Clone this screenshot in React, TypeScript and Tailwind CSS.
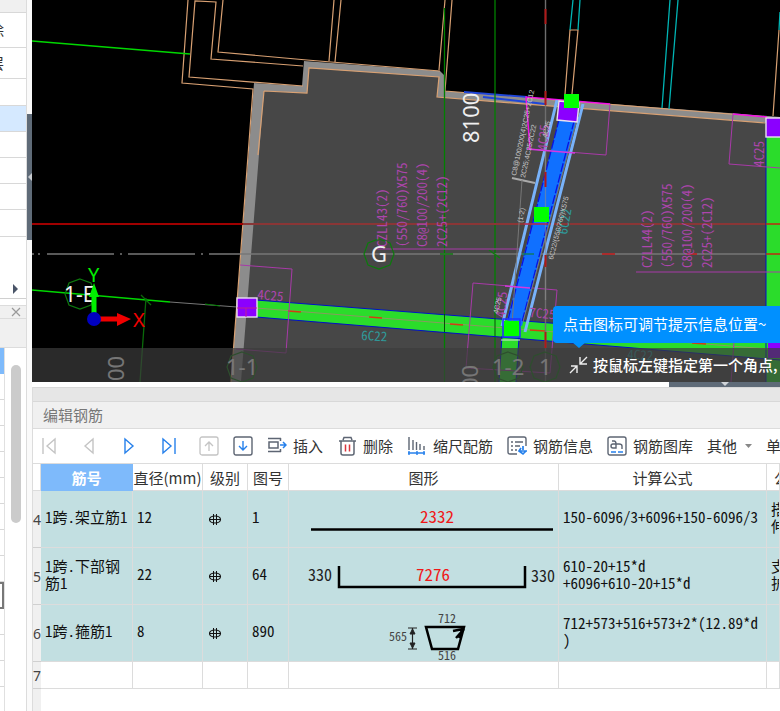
import React from "react";

const ui = "font-['Noto_Sans_CJK_SC',sans-serif]";
const mono = "font-['Noto_Sans_Mono_CJK_SC','Liberation_Mono','Noto_Sans_CJK_SC',monospace]";
const cad = "font-['Noto_Sans_Mono_CJK_SC','Noto_Sans_CJK_SC',sans-serif] text-[13px] font-light";
const axis = "font-['Noto_Sans',sans-serif] text-[22px]";

type Label = { x: number; y: number; r: number; t: string };

const beamLabels: Label[] = [
  { x: 387, y: 247, r: -90, t: "CZLL43(2)" },
  { x: 407, y: 247, r: -90, t: "(550/760)X575" },
  { x: 427, y: 247, r: -90, t: "C8@100/200(4)" },
  { x: 447, y: 247, r: -90, t: "2C25+(2C12)" },
  { x: 652, y: 268, r: -90, t: "CZLL44(2)" },
  { x: 672, y: 268, r: -90, t: "(550/760)X575" },
  { x: 692, y: 268, r: -90, t: "C8@100/200(4)" },
  { x: 712, y: 268, r: -90, t: "2C25+(2C12)" },
  { x: 257, y: 299, r: 5, t: "4C25" },
  { x: 547, y: 151, r: -85, t: "4C25" },
  { x: 764, y: 167, r: -90, t: "4C25" },
  { x: 505, y: 318, r: -85, t: "4C25" },
  { x: 529, y: 317, r: 5, t: "7C25" },
];

const tealLabels: Label[] = [
  { x: 361, y: 340, r: 3, t: "6C22" },
  { x: 627, y: 359, r: 3, t: "4C22" },
  { x: 567, y: 235, r: -80, t: "6C22" },
];

const tinyLabels: Label[] = [
  { x: 516, y: 176, r: -78, t: "C8@100/200(4)2C25+2C12" },
  { x: 525, y: 178, r: -78, t: "2C25;4C25/2C22" },
  { x: 547, y: 138, r: -78, t: "4C25" },
  { x: 553, y: 260, r: -76, t: "6C22/(550/760)X575" },
  { x: 522, y: 223, r: -78, t: "(1-2)" },
  { x: 498, y: 314, r: -78, t: "4C25" },
];

const octagons = [
  [80, 294],
  [379, 254],
  [242, 367],
  [508, 367],
  [545, 367],
];

function Labels({ items, className }: { items: Label[]; className: string }) {
  return (
    <g className={className}>
      {items.map((l, i) => (
        <text key={i} transform={`translate(${l.x} ${l.y}) rotate(${l.r})`}>
          {l.t}
        </text>
      ))}
    </g>
  );
}

function Drawing() {
  return (
    <svg
      viewBox="32 0 748 382"
      preserveAspectRatio="xMinYMin slice"
      className="block h-full w-full"
      fill="none"
      role="img"
      aria-label="CAD"
    >
      <rect x="32" y="0" width="748" height="382" fill="#000" />
      <path d="M258 86 L305 89 L307 64 L441 74 L441 94 L780 120 V382 H236 Z" fill="#474747" />
      <path
        d="M254 83 L302 86 L304 61 L440 71 L444 75 V91 L780 117 V124 L437 97 L439 77 L309 68 L307 93 L264 91 L241 382 H231 Z"
        fill="#8c8c8c"
      />
      <g stroke="#d9a173" strokeWidth="1.2">
        <path d="M188 0 L182 83 L253 89 L231 382" />
        <path d="M303 86 L189 77 L195 1 L216 2 L211 59 L303 66" />
        <path d="M223 0 L218 52 L307 60 L440 71" />
        <path d="M264 91 L258 155 M264 91 L307 93 L309 68 L439 77 L437 97 L765 123" />
        <path d="M334 0 L329 61 M341 0 L335 62 M445 0 L439 70 M452 0 L445 91 L767 117" />
        <path d="M565 94 L570 30 H578 L572 94 M779 30 L773 116" />
      </g>
      <path d="M573 0 L570 30 M580 0 L578 30 M670 0 L662 108 M678 0 L669 109 M780 12 L779 30" stroke="#00b4b4" strokeWidth="1.3" />
      <path d="M464 92 L527 97 M483 97 L545 104" stroke="#1f46d8" strokeWidth="2" />

      <path d="M32 41 L190 54 M32 290 L170 302" stroke="#00d800" strokeWidth="1.4" />
      <path d="M170 302 L237 307" stroke="#777" />
      <path d="M205 304 L220 306" stroke="#008000" />
      <path d="M146 298 L140 382 M141 295 L151 305" stroke="#0a6a0a" strokeWidth="1.3" />
      <path d="M444.5 8 V382 M495 0 V382" stroke="#008000" strokeWidth="1.3" />

      <path d="M32 224 H243" stroke="#a00000" strokeWidth="2" />
      <path d="M243 224 H780" stroke="#8a3636" strokeWidth="2" />
      <path d="M32 254 H34 M38 254 H40 M47 254 H114 M120 254 H122 M128 254 H195 M201 254 H203 M209 254 H780" stroke="#777" strokeWidth="1.4" />
      <path d="M440 254 H453 M489 250 L500 258" stroke="#107a10" strokeWidth="1.4" />
      <path d="M602 254 H615 M687 254 H697" stroke="#c01818" strokeWidth="1.6" />

      <g fill="#2bdc2b">
        <path d="M256 300 L780 341 V360 L256 317 Z" />
        <path d="M502 336 L519 337 L516 382 H499 Z" />
        <rect x="766" y="137" width="14" height="245" />
      </g>
      <path d="M256 300 L780 341 M256 317 L780 360 M502 336 L499 382 M519 337 L516 382 M766 137 V382" stroke="#0010c8" strokeWidth="1" />
      <path d="M256 308 L780 350" stroke="#8a9a60" />
      <path d="M288 311 L301 312 M369 317 L382 318 M450 324 L463 325 M530 330 L545 331 M692 343 L706 344" stroke="#d04010" strokeWidth="1.6" />
      <path d="M444.5 314 V332 M495 318 V336" stroke="#0a4a0a" />
      <path d="M766 224 H780 M766 254 H780" stroke="#c02a10" strokeWidth="1.6" />

      <g stroke="#a83aa8">
        <path d="M606 155 L530 149 M610 104 L606 155" />
        <path d="M733 114 L729 164 L780 168" />
        <path d="M473 283 L557 290 L550 373 L466 368 Z" />
        <path d="M240 265 L292 269 L286 353 L236 349" />
        <path d="M376 249 H522 M636 272 H780 M734 342 L731 382" />
      </g>
      <path d="M530 149 L526 97 L610 104 M733 114 L767 117" stroke="#f010e8" strokeWidth="1.5" />

      <path d="M545.5 0 V382" stroke="#6e6e6e" strokeWidth="1.4" />
      <path d="M562 108 L580 108 L522 326 L507 320 Z" fill="#1070ff" />
      <path d="M557 100 L502 326 M583 104 L525 332" stroke="#78b2fa" strokeWidth="3" />
      <path d="M562 108 L508 320 M577 110 L522 322" stroke="#0a12e0" strokeWidth="1.3" strokeDasharray="9 2" />
      <path d="M580 108 L523 322" stroke="#777" strokeWidth="1" />
      <path d="M545.5 120 V300" stroke="#8a8a8a" strokeOpacity=".6" strokeWidth="1.3" />
      <path d="M512 178 L535 183" stroke="#aaa" strokeWidth="2" />
      <path d="M522 180 L512 325" stroke="#777" />
      <path d="M545.5 9 V24 M545.5 91 V105 M545.5 172 V187 M545.5 255 V267 M545.5 332 V348" stroke="#b01818" strokeWidth="2" />
      <path d="M527 149 L575 153 M505 286 L530 288" stroke="#d838e0" strokeWidth="1.3" />
      <path d="M524 224 H548" stroke="#b02a50" strokeWidth="1.6" />
      <path d="M522 254 H534" stroke="#107a70" strokeWidth="1.6" />

      <g fill="#8b00ff" stroke="#e8e0f0" strokeWidth="1.4">
        <rect x="237" y="298" width="20" height="19" />
        <path d="M559 101 L579 103 L577 122 L557 120 Z" />
        <rect x="766" y="118" width="20" height="19" />
      </g>
      <rect x="768" y="342" width="12" height="16" fill="#8b00ff" />
      <path d="M237 308 H257 M246 308 V317" stroke="#c02090" />
      <rect x="503" y="319" width="17" height="18" stroke="#2030ff" strokeWidth="1.5" />
      <path d="M501 340 H520" stroke="#ddd" />

      <g stroke="#0d7a0d" strokeWidth="1.2">
        {octagons.map(([cx, cy]) => (
          <path key={cx} d={`M${cx} ${cy - 15} l11 4 l4 11 l-4 11 l-11 4 l-11 -4 l-4 -11 l4 -11 z`} />
        ))}
      </g>

      <Labels items={beamLabels} className={`${cad} fill-[#ad45ad]`} />
      <Labels items={tealLabels} className={`${cad} fill-[#2f9a9a]`} />
      <Labels items={tinyLabels} className="fill-[#c8c8c8] font-['Liberation_Sans',sans-serif] text-[7px]" />

      <g className={`${axis} fill-[#f0f0f0]`}>
        <text transform="translate(479 143) rotate(-90)">8100</text>
        <text x="371" y="262">G</text>
        <text x="64" y="302" className="text-[21px]">1-E</text>
      </g>
      <g className={`${axis} fill-[#fff]`}>
        <text transform="translate(124 381) rotate(-90)">00</text>
        <text transform="translate(478 390) rotate(-90)">00</text>
        <text x="226" y="375">1-1</text>
        <text x="492" y="375">1-2</text>
        <text x="539" y="375">1</text>
      </g>

      <g fill="#00ff00">
        <rect x="564" y="94" width="15" height="14" />
        <rect x="534" y="207" width="15" height="15" />
        <rect x="504" y="321" width="15" height="15" />
      </g>

      <path d="M94 319 V292" stroke="#00f000" strokeWidth="5" />
      <path d="M89 297 L94 283 L99 297 Z" fill="#00f000" />
      <path d="M94 319 H118" stroke="#f00000" strokeWidth="5" />
      <path d="M117 313 L131 319 L117 326 Z" fill="#f00000" />
      <circle cx="94" cy="319" r="7" fill="#0000c0" />
      <text x="88" y="282" className="fill-[#00f000] font-['Noto_Sans',sans-serif] text-[20px]">Y</text>
      <text x="133" y="327" className="fill-[#f00000] font-['Noto_Sans',sans-serif] text-[20px]">X</text>
    </svg>
  );
}

function Viewport() {
  return (
    <section className="relative h-[382px] overflow-hidden bg-black">
      <Drawing />
      <div className="absolute inset-x-0 bottom-0 flex h-[34px] items-center overflow-hidden bg-[#3c3c3c]/70">
        <svg className="ml-[536px] shrink-0" width="20" height="20" viewBox="0 0 20 20" fill="none" stroke="#eee" strokeWidth="1.4">
          <path d="M2 18 L9 11 M3 11 H9 V18 M19 2 L12 9 M12 2 V9 H19" />
        </svg>
        <span className="ml-[5px] text-[15px] font-medium whitespace-nowrap text-white">按鼠标左键指定第一个角点,</span>
      </div>
      <div className="absolute top-[306px] right-0 left-[521px] flex h-[37px] items-center rounded-l bg-[#0090ff] pl-[10px] text-[15px] whitespace-nowrap text-white">
        点击图标可调节提示信息位置~
        <svg className="absolute top-[36px] left-[19px]" width="14" height="7" viewBox="0 0 14 7">
          <path d="M0 0 H14 L7 6 Z" fill="#0090ff" />
        </svg>
      </div>
    </section>
  );
}

const listRows = [
  { h: "h-[35px]", t: "除", on: false },
  { h: "h-[31px]", t: "层", on: false },
  { h: "h-[27px]", t: "", on: false },
  { h: "h-[26px]", t: "", on: true },
  { h: "h-[26px]", t: "", on: false },
  { h: "h-[26px]", t: "", on: false },
  { h: "h-[26px]", t: "", on: false },
  { h: "h-[27px]", t: "", on: false },
];

function Sidebar() {
  return (
    <aside className="flex w-[27px] shrink-0 flex-col border-r border-[#dcdcdc] bg-white">
      <div className="flex h-[299px] flex-col border-b border-[#d0d0d0]">
        <div className="h-[13px] border-b border-[#d8d8d8] bg-[#f0f0f0]" />
        {listRows.map((r, i) => (
          <div key={i} className={`${r.h} flex shrink-0 items-center border-b border-[#d8d8d8] ${r.on ? "bg-[#d5e9ff]" : ""}`}>
            <span className="flex w-[4px] justify-end overflow-hidden text-[15px] text-[#333]">{r.t}</span>
          </div>
        ))}
        <button type="button" aria-label="展开" className="mt-auto mb-[4px] ml-[13px] w-[8px]">
          <svg width="6" height="10" viewBox="0 0 6 10"><path d="M0 0 L5 5 L0 10 Z" fill="#4a5568" /></svg>
        </button>
      </div>
      <div className="mt-[6px] flex h-[14px] items-center justify-end border-y border-[#dcdcdc] bg-[#f0f0f0] pr-[4px]">
        <button type="button" aria-label="关闭">
          <svg width="11" height="10" viewBox="0 0 11 10" stroke="#999" strokeWidth="1.2"><path d="M1 1 L9 9 M9 1 L1 9" /></svg>
        </button>
      </div>
      <div className="h-[29px] border-b border-[#dcdcdc] bg-[#f0f0f0]" />
      <div className="flex flex-1">
        <div className="flex w-[5px] flex-col border-r border-[#e0e0e0]">
          <div className="h-[26px] shrink-0 bg-[#7ebafb]" />
          {[0, 1, 2, 3, 4, 5, 6, 7].map((n) => (
            <div key={n} className="h-[26px] shrink-0 border-b border-[#d8d8d8]" />
          ))}
          <div className="h-[27px] shrink-0 border-y-2 border-r-2 border-[#777]" />
          {[0, 1, 2].map((n) => (
            <div key={n} className="h-[26px] shrink-0 border-b border-[#d8d8d8]" />
          ))}
        </div>
        <div className="mt-[17px] ml-[6px] h-[158px] w-[10px] rounded-full bg-[#cbcbcb]" />
      </div>
    </aside>
  );
}

function NavIcon({ d, color, bar }: { d: string; color: string; bar?: string }) {
  return (
    <svg width="20" height="20" viewBox="0 0 20 20" fill="none" stroke={color} strokeWidth="1.4">
      <path d={d} />
      {bar && <path d={bar} />}
    </svg>
  );
}

const gray = "#5d6573";
const blue = "#2680eb";

function Toolbar() {
  return (
    <div role="toolbar" className="flex h-[35px] items-center overflow-hidden border-b border-[#dcdcdc] bg-white pl-[6px] text-[15px] whitespace-nowrap text-[#333]">
      <div className="flex shrink-0 items-center gap-5">
        <button type="button" aria-label="第一条"><NavIcon color="#c4c4c4" d="M16 3 V17 L8 10 Z" bar="M4 2 V18" /></button>
        <button type="button" aria-label="上一条"><NavIcon color="#c4c4c4" d="M14 3 V17 L6 10 Z" /></button>
        <button type="button" aria-label="下一条"><NavIcon color={blue} d="M6 3 V17 L14 10 Z" /></button>
        <button type="button" aria-label="最后一条"><NavIcon color={blue} d="M4 3 V17 L12 10 Z" bar="M16 2 V18" /></button>
        <button type="button" aria-label="上移">
          <svg width="20" height="20" viewBox="0 0 20 20" fill="none" stroke="#c4c4c4" strokeWidth="1.3">
            <rect x="1" y="1" width="18" height="18" rx="2" /><path d="M10 15 V6 M6 10 L10 6 L14 10" />
          </svg>
        </button>
      </div>
      <div className="ml-[14px] flex shrink-0 items-center gap-[14px]">
        <button type="button" aria-label="下移">
          <svg width="20" height="20" viewBox="0 0 20 20" fill="none" stroke={gray} strokeWidth="1.4">
            <rect x="1" y="1" width="18" height="18" rx="2" /><path stroke={blue} d="M10 5 V14 M6 10 L10 14 L14 10" />
          </svg>
        </button>
        <button type="button" className="flex items-center gap-[6px]">
          <svg width="20" height="20" viewBox="0 0 20 20" fill="none" stroke={gray} strokeWidth="1.5">
            <path d="M1 2.500 H14 M1 15.500 H14 M13.500 2 V5 M13.500 13 V16" /><rect x="2" y="6" width="9" height="6" />
            <path stroke={blue} d="M13 9 H19 M16 6 L19 9 L16 12" />
          </svg>
          插入
        </button>
        <button type="button" className="flex items-center gap-[6px]">
          <svg width="20" height="20" viewBox="0 0 20 20" fill="none" stroke={gray} strokeWidth="1.5">
            <path d="M2 5 H19 M6 4 L7 1.500 H14 L15 4 M4 5 V17 Q4 19 6 19 H15 Q17 19 17 17 V5" />
            <path stroke="#d9363e" d="M8.500 8.500 V15.500 M12.500 8.500 V15.500" />
          </svg>
          删除
        </button>
        <button type="button" className="flex items-center gap-[6px]">
          <svg width="20" height="20" viewBox="0 0 20 20" fill="none" stroke={gray} strokeWidth="1.4">
            <path d="M2 1 V14 M6 4 V14 M9.500 6 V14 M13 8 V14 M17 10 V14" />
            <path stroke={blue} d="M1 17 H18 M2 15 V19 M10 15 V19 M17 15 V19" />
          </svg>
          缩尺配筋
        </button>
        <button type="button" className="flex items-center gap-[6px]">
          <svg width="20" height="20" viewBox="0 0 20 20" fill="none" stroke={gray} strokeWidth="1.4">
            <path d="M10 18 H3 Q1 18 1 16 V3 Q1 1 3 1 H17 Q19 1 19 3 V10 M4 6 H6 M8 6 H16 M4 10 H6 M8 10 H13 M4 14 H6 M8 14 H10" />
            <path stroke={blue} strokeWidth="1.7" d="M16 10 V14 M12 15 H20 M14 12 L12 15 L16 18 L19 15" />
          </svg>
          钢筋信息
        </button>
        <button type="button" className="flex items-center gap-[6px]">
          <svg width="20" height="20" viewBox="0 0 20 20" fill="none" stroke={gray} strokeWidth="1.4">
            <rect x="1" y="1" width="18" height="18" rx="2" />
            <path d="M5 5 H7 Q9 5 9 8 V12 H6 Q4 12 4 10 Q4 8 6 8 H12 Q15 8 15 10 V13" />
            <path stroke={blue} d="M4 16 H9 M11 16 H16" />
          </svg>
          钢筋图库
        </button>
        <button type="button" className="flex items-center gap-[8px]">
          其他
          <svg width="7" height="4" viewBox="0 0 7 4"><path d="M0 0 H7 L3.500 4 Z" fill="#888" /></svg>
        </button>
        <button type="button">单</button>
      </div>
    </div>
  );
}

function Straight() {
  return (
    <svg className="block w-full" height="56" viewBox="0 0 269 56" aria-label="2332">
      <path d="M22 38.500 H264" stroke="#000" strokeWidth="2.500" />
      <text x="148" y="32" textAnchor="middle" className="fill-[#f01818] text-[17px]">2332</text>
    </svg>
  );
}

function Channel() {
  return (
    <svg className="block w-full" height="56" viewBox="0 0 269 56" aria-label="7276">
      <path d="M50 18 V39 H236 V18" fill="none" stroke="#000" strokeWidth="2.500" />
      <text x="144" y="33" textAnchor="middle" className="fill-[#f01818] text-[17px]">7276</text>
      <text x="19" y="33" className="fill-[#222] text-[16px]">330</text>
      <text x="242" y="34" className="fill-[#222] text-[16px]">330</text>
    </svg>
  );
}

function Stirrup() {
  return (
    <svg className="block w-full" height="56" viewBox="0 0 269 56" aria-label="890">
      <path d="M137 22 H175 L169 44 H143 Z" fill="none" stroke="#000" strokeWidth="2.500" />
      <path d="M175 24 L167 33 M174 24 L164 26 M173 25 L170 33" fill="none" stroke="#000" strokeWidth="2.500" />
      <path d="M119 23 H128 M119 44 H128 M123.500 23 V44" stroke="#222" strokeWidth="1.200" />
      <path d="M121 29 L123.500 24 L126 29 Z M121 38 L123.500 43 L126 38 Z" fill="#222" stroke="#222" />
      <g className="fill-[#444] text-[12px]">
        <text x="149" y="18">712</text>
        <text x="149" y="55">516</text>
        <text x="100" y="36">565</text>
      </g>
    </svg>
  );
}

function Grade() {
  return (
    <svg width="13" height="13" viewBox="0 0 13 13" fill="none" stroke="#111" aria-label="HRB400">
      <ellipse cx="6" cy="6.500" rx="5.500" ry="3.500" strokeWidth="1.200" />
      <path d="M1 6.500 H11 M4.500 1 V12 M7.500 1 V12" />
    </svg>
  );
}

const bars = [
  { n: 4, name: "1跨.架立筋1", dia: "12", fig: "1", shape: <Straight />, calc: ["150-6096/3+6096+150-6096/3"], note: ["搭", "伸"] },
  { n: 5, name: "1跨.下部钢筋1", dia: "22", fig: "64", shape: <Channel />, calc: ["610-20+15*d", "+6096+610-20+15*d"], note: ["支", "护"] },
  { n: 6, name: "1跨.箍筋1", dia: "8", fig: "890", shape: <Stirrup />, calc: ["712+573+516+573+2*(12.89*d", ")"], note: [] },
];

const th = "border-r border-b border-[#dcdcdc] p-0 font-normal overflow-hidden whitespace-nowrap";
const td = "border-r border-b border-[#dcdcdc] px-[4px] pt-0 pb-[5px] overflow-hidden";
const rowHead = "border-b border-[#d0d0d0] bg-[#f0f0f0] p-0 font-['Noto_Sans',sans-serif] text-[14px] font-normal text-[#444]";

function Lines({ items }: { items: string[] }) {
  return (
    <>
      {items.map((s) => (
        <div key={s} className="whitespace-nowrap">{s}</div>
      ))}
    </>
  );
}

function BarTable() {
  return (
    <table className="w-full table-fixed border-separate border-spacing-0 text-[15px] leading-[17px] text-[#111]">
      <colgroup>
        <col className="w-[8px]" />
        <col className="w-[92px]" />
        <col className="w-[70px]" />
        <col className="w-[45px]" />
        <col className="w-[41px]" />
        <col className="w-[270px]" />
        <col className="w-[208px]" />
        <col />
      </colgroup>
      <thead>
        <tr className="h-[27px] text-[#333]">
          <th className={th} />
          <th className="border-r border-b border-[#7ebafb] bg-[#7ebafb] p-0 font-bold text-white">筋号</th>
          <th className={th}>直径(mm)</th>
          <th className={th}>级别</th>
          <th className={th}>图号</th>
          <th className={th}>图形</th>
          <th className={th}>计算公式</th>
          <th className={`${th} pl-[7px] text-left`}>公</th>
        </tr>
      </thead>
      <tbody>
        {bars.map((b) => (
          <tr key={b.n} className={`h-[57px] bg-[#c2dfe1] ${mono}`}>
            <th scope="row" className={rowHead}>{b.n}</th>
            <td className={td}>{b.name}</td>
            <td className={td}>{b.dia}</td>
            <td className="border-r border-b border-[#dcdcdc] py-0 pr-0 pl-[6px]"><span className="flex"><Grade /></span></td>
            <td className={td}>{b.fig}</td>
            <td className="border-r border-b border-[#dcdcdc] p-0">{b.shape}</td>
            <td className={td}><Lines items={b.calc} /></td>
            <td className={td}><Lines items={b.note} /></td>
          </tr>
        ))}
        <tr className="h-[27px]">
          <th scope="row" className={rowHead}>7</th>
          {[0, 1, 2, 3, 4, 5, 6].map((n) => (
            <td key={n} className={td} />
          ))}
        </tr>
      </tbody>
    </table>
  );
}

export default function App() {
  return (
    <div className={`flex min-h-screen overflow-hidden bg-white ${ui}`}>
      <Sidebar />
      <div className="flex w-[5px] shrink-0 flex-col bg-[#fafafa]">
        <button type="button" aria-label="收起" className="mt-[114px] flex h-[126px] items-center bg-[#5f6b78]">
          <svg width="5" height="8" viewBox="0 0 5 8"><path d="M5 0 V8 L1 4 Z" fill="#c8ccd0" /></svg>
        </button>
      </div>
      <main className="flex min-w-0 flex-1 flex-col">
        <Viewport />
        <div className="flex h-[5px] justify-end bg-white">
          <button type="button" aria-label="折叠" className="flex w-[111px] justify-center bg-[#5f6b78]">
            <svg width="8" height="4" viewBox="0 0 8 4"><path d="M0 0 H8 L4 4 Z" fill="#d0d4d8" /></svg>
          </button>
        </div>
        <section className="flex flex-1 flex-col border-l border-[#dcdcdc]">
          <div className="h-[15px] border-y border-[#d8d8d8] bg-[#e6e6e6]" />
          <h2 className="flex h-[27px] items-center border-b border-[#dcdcdc] bg-[#f0f0f0] pl-[10px] text-[15px] text-[#777]">编辑钢筋</h2>
          <Toolbar />
          <div className="overflow-hidden">
            <BarTable />
          </div>
          <div className="w-[8px] flex-1 bg-[#f0f0f0]" />
        </section>
      </main>
    </div>
  );
}
